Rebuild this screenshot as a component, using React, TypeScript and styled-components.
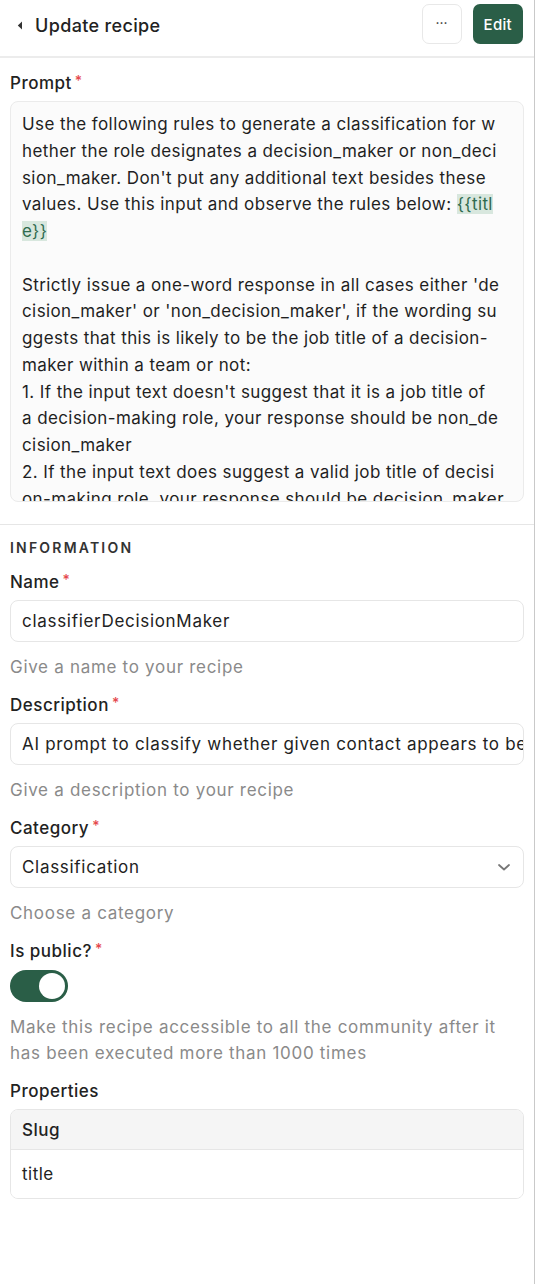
import React from "react";
import styled, { createGlobalStyle } from "styled-components";

const Global = createGlobalStyle`
  html, body { margin: 0; padding: 0; background: #fff; }
  body { font-family: Inter, "Noto Sans", sans-serif; color: #1f1f1f; letter-spacing: 0.5px; -webkit-font-smoothing: antialiased; }
  * { box-sizing: border-box; }
`;

const Panel = styled.div`
  width: 535px;
  min-height: 1284px;
  border-right: 1px solid #c9c9c9;
  background: #fff;
`;

const Header = styled.header`
  height: 58px;
  display: flex;
  align-items: center;
  justify-content: space-between;
  padding: 0 11px 0 17px;
  border-bottom: 2px solid #ececec;
`;

const TitleWrap = styled.div`
  display: flex;
  align-items: center;
  gap: 12px;
  margin-top: -6px;
`;

const Title = styled.h1`
  margin: 0;
  font-size: 18px;
  font-weight: 500;
  color: #222;
  letter-spacing: 0.35px;
`;

const Actions = styled.div`
  display: flex;
  gap: 11px;
  margin-top: -8px;
`;

const IconButton = styled.button`
  width: 40px;
  height: 40px;
  border-radius: 7px;
  border: 1px solid #e8e8e8;
  background: #fff;
  color: #333;
  font-size: 14px;
  letter-spacing: 0;
  display: flex;
  align-items: center;
  justify-content: center;
  padding: 0 0 4px;
  font-family: inherit;
`;

const PrimaryButton = styled.button`
  height: 40px;
  padding: 0 11px;
  border-radius: 7px;
  border: none;
  background: #2a5e47;
  color: #fff;
  font-family: inherit;
  font-size: 15px;
  font-weight: 500;
  letter-spacing: 0.3px;
`;

const Section = styled.section<{ $divider?: boolean; $top: number }>`
  padding: ${(p) => p.$top}px 10px 22px;
  display: flex;
  flex-direction: column;
  border-bottom: ${(p) => (p.$divider ? "1px solid #e6e6e6" : "none")};
`;

const SectionTitle = styled.div`
  font-size: 14px;
  font-weight: 600;
  letter-spacing: 2.2px;
  text-transform: uppercase;
  color: #333;
  margin: 0 0 13px;
`;

const Label = styled.label<{ $gap?: number }>`
  font-size: 17px;
  font-weight: 500;
  color: #222;
  line-height: 22px;
  margin-top: ${(p) => p.$gap ?? 0}px;
  margin-bottom: 7px;
`;

const Req = styled.span`
  color: #e5484d;
  font-size: 14px;
  margin-left: 3px;
  vertical-align: 3px;
`;

const PromptBox = styled.div`
  height: 401px;
  overflow: hidden;
  background: #fbfbfb;
  border: 1px solid #ebebeb;
  border-radius: 8px;
  padding: 9px 10px 0 11px;
  font-size: 17px;
  line-height: 26.75px;
  letter-spacing: 0.4px;
  color: #1f1f1f;
  white-space: pre;
`;

const Variable = styled.span`
  background: #d8e7de;
  color: #2f6b4f;
`;

const Input = styled.div`
  height: 42px;
  border: 1px solid #e6e6e6;
  border-radius: 8px;
  padding: 0 11px;
  display: flex;
  align-items: center;
  justify-content: space-between;
  font-size: 17px;
  letter-spacing: 0.7px;
  color: #222;
  white-space: nowrap;
  overflow: hidden;
`;

const Helper = styled.div`
  font-size: 17px;
  line-height: 26px;
  letter-spacing: 0.7px;
  color: #8a8a8a;
  margin: 12px 0 12px;
`;

const Toggle = styled.div<{ $on: boolean }>`
  width: 58px;
  height: 32px;
  border-radius: 16px;
  background: ${(p) => (p.$on ? "#2a5e47" : "#ccc")};
  padding: 3px;
  display: flex;
  justify-content: ${(p) => (p.$on ? "flex-end" : "flex-start")};
  margin-top: 1px;
  &::after {
    content: "";
    width: 26px;
    height: 26px;
    border-radius: 50%;
    background: #fff;
  }
`;

const Table = styled.div`
  border: 1px solid #e6e6e6;
  border-radius: 8px;
  overflow: hidden;
`;

const Row = styled.div<{ $head?: boolean }>`
  height: ${(p) => (p.$head ? "40px" : "48px")};
  display: flex;
  align-items: center;
  padding: 0 11px;
  font-size: 17px;
  font-weight: ${(p) => (p.$head ? 500 : 400)};
  color: #222;
  background: ${(p) => (p.$head ? "#f5f5f5" : "#fff")};
  border-bottom: ${(p) => (p.$head ? "1px solid #e6e6e6" : "none")};
`;

const Caret = () => (
  <svg width="6" height="9" viewBox="0 0 6 9">
    <path d="M5 0.5 L0.8 4.5 L5 8.5 Z" fill="#333" />
  </svg>
);

const Chevron = () => (
  <svg width="16" height="16" viewBox="0 0 16 16" fill="none">
    <path d="M3 6 L8 10.5 L13 6" stroke="#777" strokeWidth="1.8" strokeLinecap="round" strokeLinejoin="round" />
  </svg>
);

const before = [
  "Use the following rules to generate a classification for w",
  "hether the role designates a decision_maker or non_deci",
  "sion_maker. Don't put any additional text besides these",
  "values. Use this input and observe the rules below: ",
].join("\n");

const after = [
  "",
  "",
  "Strictly issue a one-word response in all cases either 'de",
  "cision_maker' or 'non_decision_maker', if the wording su",
  "ggests that this is likely to be the job title of a decision-",
  "maker within a team or not:",
  "1. If the input text doesn't suggest that it is a job title of",
  "a decision-making role, your response should be non_de",
  "cision_maker",
  "2. If the input text does suggest a valid job title of decisi",
  "on-making role, your response should be decision_maker",
].join("\n");

export default function App() {
  return (
    <>
      <Global />
      <Panel>
        <Header>
          <TitleWrap>
            <Caret />
            <Title>Update recipe</Title>
          </TitleWrap>
          <Actions>
            <IconButton>···</IconButton>
            <PrimaryButton>Edit</PrimaryButton>
          </Actions>
        </Header>
        <Section $divider $top={12}>
          <Label>
            Prompt<Req>*</Req>
          </Label>
          <PromptBox>
            {before}
            <Variable>{"{{titl\ne}}"}</Variable>
            {after}
          </PromptBox>
        </Section>
        <Section $top={14}>
          <SectionTitle>Information</SectionTitle>
          <Label>
            Name<Req>*</Req>
          </Label>
          <Input>classifierDecisionMaker</Input>
          <Helper>Give a name to your recipe</Helper>
          <Label>
            Description<Req>*</Req>
          </Label>
          <Input>AI prompt to classify whether given contact appears to be a decision maker</Input>
          <Helper>Give a description to your recipe</Helper>
          <Label>
            Category<Req>*</Req>
          </Label>
          <Input>
            Classification
            <Chevron />
          </Input>
          <Helper>Choose a category</Helper>
          <Label>
            Is public?<Req>*</Req>
          </Label>
          <Toggle $on />
          <Helper>
            Make this recipe accessible to all the community after it has been executed more than 1000 times
          </Helper>
          <Label $gap={2}>Properties</Label>
          <Table>
            <Row $head>Slug</Row>
            <Row>title</Row>
          </Table>
        </Section>
      </Panel>
    </>
  );
}
